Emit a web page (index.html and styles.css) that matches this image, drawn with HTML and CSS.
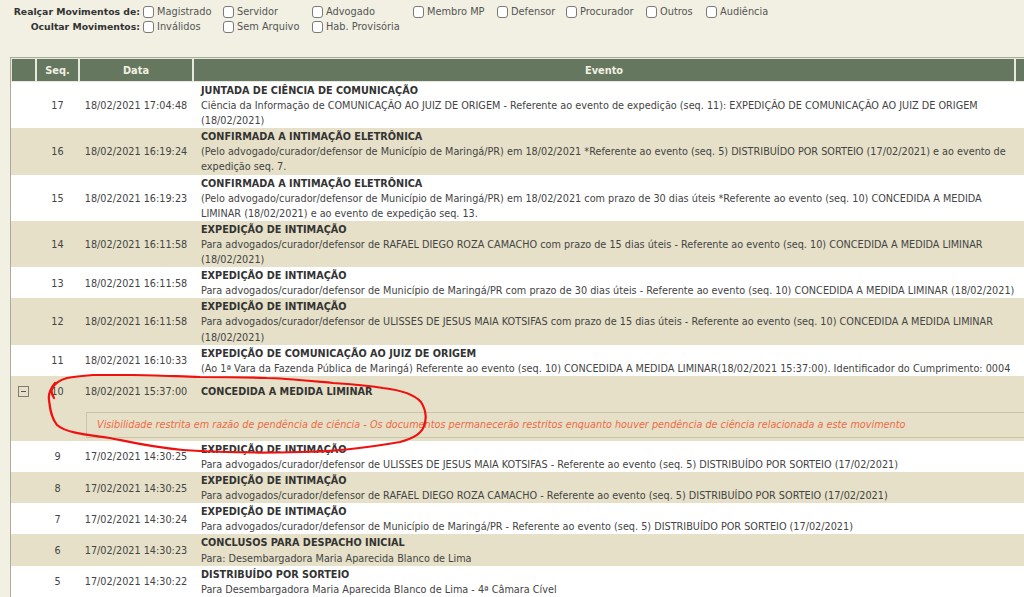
FILE: index.html
```html
<!DOCTYPE html>
<html lang="pt-BR">
<head>
<meta charset="utf-8">
<title>Movimentos</title>
<link rel="stylesheet" href="styles.css">
</head>
<body>
<div class="filters">
  <div class="flabel">Realçar Movimentos de:</div>
  <label class="opt"><input type="checkbox" class="cb">Magistrado</label>
  <label class="opt"><input type="checkbox" class="cb">Servidor</label>
  <label class="opt"><input type="checkbox" class="cb">Advogado</label>
  <label class="opt"><input type="checkbox" class="cb">Membro MP</label>
  <label class="opt"><input type="checkbox" class="cb">Defensor</label>
  <label class="opt"><input type="checkbox" class="cb">Procurador</label>
  <label class="opt"><input type="checkbox" class="cb">Outros</label>
  <label class="opt"><input type="checkbox" class="cb">Audiência</label>
  <div class="flabel">Ocultar Movimentos:</div>
  <label class="opt"><input type="checkbox" class="cb">Inválidos</label>
  <label class="opt"><input type="checkbox" class="cb">Sem Arquivo</label>
  <label class="opt"><input type="checkbox" class="cb">Hab. Provisória</label>
</div>

<table class="mov">
  <colgroup>
    <col class="c-tg"><col class="c-seq"><col class="c-data"><col class="c-ev"><col class="c-x">
  </colgroup>
  <thead>
    <tr><th></th><th>Seq.</th><th>Data</th><th>Evento</th><th></th></tr>
  </thead>
  <tbody>
    <tr class="w"><td></td><td class="seq">17</td><td class="dt">18/02/2021 17:04:48</td><td class="ev"><b>JUNTADA DE CIÊNCIA DE COMUNICAÇÃO</b><br>Ciência da Informação de COMUNICAÇÃO AO JUIZ DE ORIGEM - Referente ao evento de expedição (seq. 11): EXPEDIÇÃO DE COMUNICAÇÃO AO JUIZ DE ORIGEM<br>(18/02/2021)</td><td></td></tr>
    <tr class="b"><td></td><td class="seq">16</td><td class="dt">18/02/2021 16:19:24</td><td class="ev"><b>CONFIRMADA A INTIMAÇÃO ELETRÔNICA</b><br>(Pelo advogado/curador/defensor de Município de Maringá/PR) em 18/02/2021 *Referente ao evento (seq. 5) DISTRIBUÍDO POR SORTEIO (17/02/2021) e ao evento de<br>expedição seq. 7.</td><td></td></tr>
    <tr class="w"><td></td><td class="seq">15</td><td class="dt">18/02/2021 16:19:23</td><td class="ev"><b>CONFIRMADA A INTIMAÇÃO ELETRÔNICA</b><br>(Pelo advogado/curador/defensor de Município de Maringá/PR) em 18/02/2021 com prazo de 30 dias úteis *Referente ao evento (seq. 10) CONCEDIDA A MEDIDA<br>LIMINAR (18/02/2021) e ao evento de expedição seq. 13.</td><td></td></tr>
    <tr class="b"><td></td><td class="seq">14</td><td class="dt">18/02/2021 16:11:58</td><td class="ev"><b>EXPEDIÇÃO DE INTIMAÇÃO</b><br>Para advogados/curador/defensor de RAFAEL DIEGO ROZA CAMACHO com prazo de 15 dias úteis - Referente ao evento (seq. 10) CONCEDIDA A MEDIDA LIMINAR<br>(18/02/2021)</td><td></td></tr>
    <tr class="w"><td></td><td class="seq">13</td><td class="dt">18/02/2021 16:11:58</td><td class="ev"><b>EXPEDIÇÃO DE INTIMAÇÃO</b><br>Para advogados/curador/defensor de Município de Maringá/PR com prazo de 30 dias úteis - Referente ao evento (seq. 10) CONCEDIDA A MEDIDA LIMINAR (18/02/2021)</td><td></td></tr>
    <tr class="b"><td></td><td class="seq">12</td><td class="dt">18/02/2021 16:11:58</td><td class="ev"><b>EXPEDIÇÃO DE INTIMAÇÃO</b><br>Para advogados/curador/defensor de ULISSES DE JESUS MAIA KOTSIFAS com prazo de 15 dias úteis - Referente ao evento (seq. 10) CONCEDIDA A MEDIDA LIMINAR<br>(18/02/2021)</td><td></td></tr>
    <tr class="w"><td></td><td class="seq">11</td><td class="dt">18/02/2021 16:10:33</td><td class="ev"><b>EXPEDIÇÃO DE COMUNICAÇÃO AO JUIZ DE ORIGEM</b><br>(Ao 1ª Vara da Fazenda Pública de Maringá) Referente ao evento (seq. 10) CONCEDIDA A MEDIDA LIMINAR(18/02/2021 15:37:00). Identificador do Cumprimento: 0004</td><td></td></tr>
    <tr class="b open"><td class="tg"><span class="minus"></span></td><td class="seq">10</td><td class="dt">18/02/2021 15:37:00</td><td class="ev"><b>CONCEDIDA A MEDIDA LIMINAR</b></td><td></td></tr>
    <tr class="b restr-row"><td></td><td></td><td colspan="3" class="restr-cell"><div class="restr">Visibilidade restrita em razão de pendência de ciência - Os documentos permanecerão restritos enquanto houver pendência de ciência relacionada a este movimento</div></td></tr>
    <tr class="w"><td></td><td class="seq">9</td><td class="dt">17/02/2021 14:30:25</td><td class="ev"><b>EXPEDIÇÃO DE INTIMAÇÃO</b><br>Para advogados/curador/defensor de ULISSES DE JESUS MAIA KOTSIFAS - Referente ao evento (seq. 5) DISTRIBUÍDO POR SORTEIO (17/02/2021)</td><td></td></tr>
    <tr class="b"><td></td><td class="seq">8</td><td class="dt">17/02/2021 14:30:25</td><td class="ev"><b>EXPEDIÇÃO DE INTIMAÇÃO</b><br>Para advogados/curador/defensor de RAFAEL DIEGO ROZA CAMACHO - Referente ao evento (seq. 5) DISTRIBUÍDO POR SORTEIO (17/02/2021)</td><td></td></tr>
    <tr class="w"><td></td><td class="seq">7</td><td class="dt">17/02/2021 14:30:24</td><td class="ev"><b>EXPEDIÇÃO DE INTIMAÇÃO</b><br>Para advogados/curador/defensor de Município de Maringá/PR - Referente ao evento (seq. 5) DISTRIBUÍDO POR SORTEIO (17/02/2021)</td><td></td></tr>
    <tr class="b"><td></td><td class="seq">6</td><td class="dt">17/02/2021 14:30:23</td><td class="ev"><b>CONCLUSOS PARA DESPACHO INICIAL</b><br>Para: Desembargadora Maria Aparecida Blanco de Lima</td><td></td></tr>
    <tr class="w"><td></td><td class="seq">5</td><td class="dt">17/02/2021 14:30:22</td><td class="ev"><b>DISTRIBUÍDO POR SORTEIO</b><br>Para Desembargadora Maria Aparecida Blanco de Lima - 4ª Câmara Cível</td><td></td></tr>
  </tbody>
</table>

<svg class="annot" width="1024" height="597" viewBox="0 0 1024 597" aria-hidden="true">
  <path d="M55 383 C51 388 48 394 49 400 C50 408 51 418 57 425 C65 432 80 434 110 438 C130 442 150 447 183 450 C210 452 260 453 300 452 C330 452 360 449 400 442 C415 438 422 433 424 426 C427 418 426 410 421 402 C414 394 400 390 383 388 C365 385 350 384 333 383 C300 380 280 378 267 378 C240 377 220 377 200 377 C170 376 150 375 133 375 C115 375 100 375 93 375 C80 376 72 377 67 378 C60 380 54 384 52 389 C51 392 52 395 54 398"/>
</svg>
</body>
</html>
```

FILE: styles.css
```css
html, body {
  margin: 0;
  padding: 0;
}
body {
  background: #f1f0e2;
  font-family: "DejaVu Sans", Verdana, sans-serif;
  font-size: 9.7px;
  color: #444;
  overflow: hidden;
  width: 1024px;
  height: 597px;
  position: relative;
}

/* filters */
.filters {
  display: grid;
  grid-template-columns: 143px 80px 89px 101px 84px 69px 80px 60px 110px;
  grid-auto-rows: 15px;
  padding-top: 4px;
  font-size: 9.8px;
}
.flabel {
  font-weight: bold;
  font-size: 9.3px;
  color: #333;
  text-align: right;
  padding-right: 3px;
  line-height: 15px;
  white-space: nowrap;
}
.opt {
  display: flex;
  align-items: center;
  gap: 3px;
  color: #555;
  white-space: nowrap;
  line-height: 15px;
}
.cb {
  appearance: none;
  -webkit-appearance: none;
  margin: 0;
  width: 11px;
  height: 12px;
  border: 1px solid #7a7a7a;
  border-radius: 3px;
  background: #fff;
  flex: none;
}

/* table */
.mov {
  margin: 23px 0 0 10px;
  border-collapse: separate;
  border-spacing: 0;
  table-layout: fixed;
  width: 1040px;
  border-left: 1px solid #a9ab9b;
  border-top: 1px solid #a9ab9b;
}
.c-tg { width: 25px; }
.c-seq { width: 43px; }
.c-data { width: 114px; }
.c-ev { width: 822px; }
.c-x { width: 36px; }

.mov th {
  background: #667760;
  color: #f1f0e2;
  font-weight: bold;
  font-size: 9.8px;
  height: 22px;
  padding: 0;
  border: 1px solid #e6e8de;
  text-align: center;
  vertical-align: middle;
}
.mov td {
  padding: 1px 0 0;
  line-height: 15.1px;
  vertical-align: middle;
}
.mov tr.w td { background: #fff; }
.mov tr.b td { background: #e5e0c7; }

.mov td.seq { text-align: center; }
.mov td.dt { text-align: center; white-space: nowrap; }
.mov td.ev {
  vertical-align: top;
  padding-left: 8px;
  white-space: nowrap;
  overflow: hidden;
}
.mov td.ev b {
  color: #333;
}

/* expanded row 10 */
.mov tr.open td {
  vertical-align: top;
  padding-top: 8px;
}
.mov tr.open td.tg {
  text-align: center;
}
.minus {
  display: inline-block;
  position: relative;
  width: 9px;
  height: 9px;
  border: 1px solid #7d7d72;
  margin-top: 2px;
  vertical-align: top;
}
.minus::after {
  content: "";
  position: absolute;
  left: 2px;
  right: 2px;
  top: 4px;
  height: 1px;
  background: #555;
}
.mov tr.restr-row td {
  padding: 13px 0 3px;
}
.mov tr.restr-row td.restr-cell {
  padding-left: 7px;
}
.restr {
  border: 1px solid #c9c3a7;
  height: 24px;
  line-height: 24px;
  padding-left: 10px;
  color: #ef6a46;
  font-style: italic;
  white-space: nowrap;
}

/* annotation */
.annot {
  position: absolute;
  left: 0;
  top: 0;
  pointer-events: none;
}
.annot path {
  fill: none;
  stroke: #f01010;
  stroke-width: 2.2;
  stroke-linecap: round;
  stroke-linejoin: round;
}
```
